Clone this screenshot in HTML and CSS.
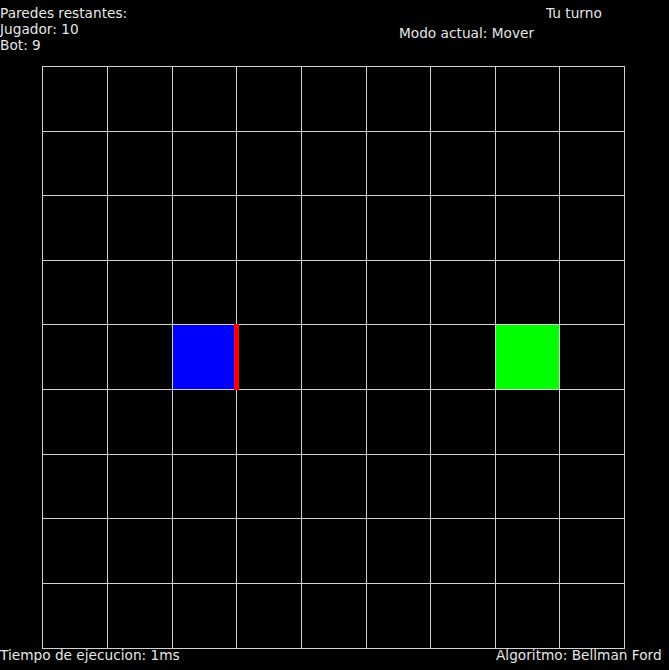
FILE: index.html
```html
<!DOCTYPE html>
<html lang="es">
<head>
<meta charset="utf-8">
<title>Juego</title>
<link rel="stylesheet" href="styles.css">
</head>
<body>
<div class="screen">
  <header class="hud">
    <div class="walls">
      <div>Paredes restantes:</div>
      <div>Jugador: 10</div>
      <div>Bot: 9</div>
    </div>
    <div class="status">
      <div class="turn">Tu turno</div>
      <div class="mode">Modo actual: Mover</div>
    </div>
  </header>
  <div class="board">
    <svg class="grid" width="583" height="583" viewBox="0 0 583 583">
      <rect x="130" y="259" width="64" height="64" fill="#0000ff"/>
      <rect x="453" y="259" width="64" height="64" fill="#00ff00"/>
      <g stroke="#d2d2d2" stroke-width="1" shape-rendering="crispEdges">
        <line x1="0.5" y1="0" x2="0.5" y2="583"/>
        <line x1="65.5" y1="0" x2="65.5" y2="583"/>
        <line x1="130.5" y1="0" x2="130.5" y2="583"/>
        <line x1="194.5" y1="0" x2="194.5" y2="583"/>
        <line x1="259.5" y1="0" x2="259.5" y2="583"/>
        <line x1="324.5" y1="0" x2="324.5" y2="583"/>
        <line x1="388.5" y1="0" x2="388.5" y2="583"/>
        <line x1="453.5" y1="0" x2="453.5" y2="583"/>
        <line x1="517.5" y1="0" x2="517.5" y2="583"/>
        <line x1="582.5" y1="0" x2="582.5" y2="583"/>
        <line x1="0" y1="0.5" x2="583" y2="0.5"/>
        <line x1="0" y1="65.5" x2="583" y2="65.5"/>
        <line x1="0" y1="129.5" x2="583" y2="129.5"/>
        <line x1="0" y1="194.5" x2="583" y2="194.5"/>
        <line x1="0" y1="258.5" x2="583" y2="258.5"/>
        <line x1="0" y1="323.5" x2="583" y2="323.5"/>
        <line x1="0" y1="388.5" x2="583" y2="388.5"/>
        <line x1="0" y1="452.5" x2="583" y2="452.5"/>
        <line x1="0" y1="517.5" x2="583" y2="517.5"/>
        <line x1="0" y1="582.5" x2="583" y2="582.5"/>
      </g>
      <rect x="192" y="258" width="5" height="66" fill="#ff0000"/>
    </svg>
  </div>
  <footer class="info">
    <div>Tiempo de ejecucion: 1ms</div>
    <div class="algo">Algoritmo: Bellman Ford</div>
  </footer>
</div>
</body>
</html>
```
FILE: styles.css
```css
html, body {
  margin: 0;
  padding: 0;
  background: #000;
}
.screen {
  width: 669px;
  height: 670px;
  overflow: hidden;
  background: #000;
  color: #e6e6e6;
  font-family: "DejaVu Sans", sans-serif;
  font-size: 13.7px;
  display: flex;
  flex-direction: column;
}
.hud {
  height: 66px;
  display: flex;
  box-sizing: border-box;
  padding-top: 4.5px;
  line-height: 16.3px;
}
.walls {
  width: 399px;
}
.status .turn {
  padding-left: 147px;
}
.status .mode {
  margin-top: 4.1px;
}
.board {
  padding-left: 42px;
  height: 583px;
}
.grid {
  display: block;
}
.info {
  display: flex;
  line-height: 12px;
  white-space: nowrap;
}
.info .algo {
  margin-left: auto;
  width: 173px;
}
```
